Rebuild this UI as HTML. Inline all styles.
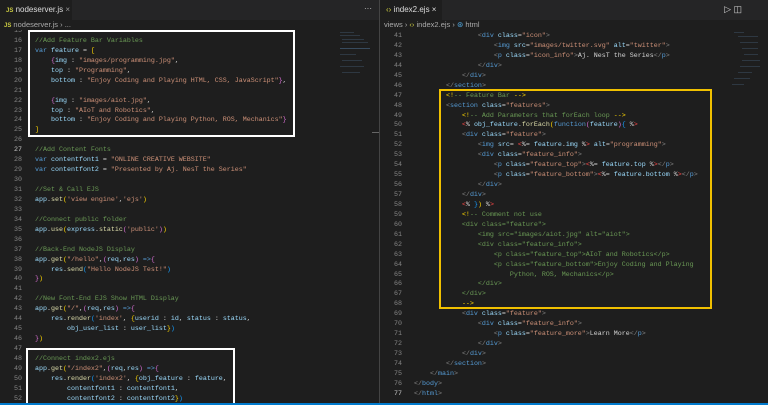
<!DOCTYPE html>
<html><head><meta charset="utf-8"><style>
*{margin:0;padding:0;box-sizing:border-box}
body{width:768px;height:405px;background:#1e1e1e;overflow:hidden;position:relative;font-family:"Liberation Sans",sans-serif}
.pane{position:absolute;top:0;height:405px;overflow:hidden;background:#1e1e1e}
.tabs{position:absolute;top:0;left:0;right:0;height:20px;background:#252526}
.tab{position:absolute;top:0;height:20px;background:#1e1e1e;color:#ddd;font-size:8px;line-height:20px;padding-left:6px;white-space:nowrap}
.crumb{position:absolute;top:20px;left:0;height:10px;color:#aaa;font-size:7.5px;line-height:10px;padding-left:4px;white-space:nowrap}
.code{position:absolute;left:0;font-family:"Liberation Mono",monospace;font-size:6.67px;line-height:9.93px;white-space:pre;color:#d4d4d4}
.ln{position:absolute;left:0;width:22px;text-align:right;font-family:"Liberation Mono",monospace;font-size:6.67px;line-height:9.93px;color:#858585;white-space:pre}
.c{color:#6a9955}.k{color:#569cd6}.v{color:#9cdcfe}.s{color:#ce9178}.f{color:#dcdcaa}.y{color:#ffd700}.p{color:#da70d6}.b{color:#179fff}.g{color:#808080}.w{color:#d4d4d4}.e{color:#f44747}
.box{position:absolute;border:2px solid #fff}
.minimap{position:absolute;background:#3a4a5a;height:1px}
</style></head><body>

<div class="pane" style="left:0;width:380px">
 <div class="ln" style="top:27px">15
16
17
18
19
20
21
22
23
24
25
26
<span style="color:#c6c6c6">27</span>
28
29
30
31
32
33
34
35
36
37
38
39
40
41
42
43
44
45
46
47
48
49
50
51
52</div>
 <div class="code" style="top:27px;left:35px">
<span class="c">//Add Feature Bar Variables</span>
<span class="k">var</span> <span class="v">feature</span> = <span class="y">[</span>
    <span class="p">{</span><span class="v">img</span> : <span class="s">"images/programming.jpg"</span>,
    <span class="v">top</span> : <span class="s">"Programming"</span>,
    <span class="v">bottom</span> : <span class="s">"Enjoy Coding and Playing HTML, CSS, JavaScript"</span><span class="p">}</span>,

    <span class="p">{</span><span class="v">img</span> : <span class="s">"images/aiot.jpg"</span>,
    <span class="v">top</span> : <span class="s">"AIoT and Robotics"</span>,
    <span class="v">bottom</span> : <span class="s">"Enjoy Coding and Playing Python, ROS, Mechanics"</span><span class="p">}</span>
<span class="y">]</span>

<span class="c">//Add Content Fonts</span>
<span class="k">var</span> <span class="v">contentfont1</span> = <span class="s">"ONLINE CREATIVE WEBSITE"</span>
<span class="k">var</span> <span class="v">contentfont2</span> = <span class="s">"Presented by Aj. NesT the Series"</span>

<span class="c">//Set &amp; Call EJS</span>
<span class="v">app</span>.<span class="f">set</span><span class="y">(</span><span class="s">'view engine'</span>,<span class="s">'ejs'</span><span class="y">)</span>

<span class="c">//Connect public folder</span>
<span class="v">app</span>.<span class="f">use</span><span class="y">(</span><span class="v">express</span>.<span class="f">static</span><span class="p">(</span><span class="s">'public'</span><span class="p">)</span><span class="y">)</span>

<span class="c">//Back-End NodeJS Display</span>
<span class="v">app</span>.<span class="f">get</span><span class="y">(</span><span class="s">"/hello"</span>,<span class="p">(</span><span class="v">req</span>,<span class="v">res</span><span class="p">)</span> <span class="k">=&gt;</span><span class="p">{</span>
    <span class="v">res</span>.<span class="f">send</span><span class="b">(</span><span class="s">"Hello NodeJS Test!"</span><span class="b">)</span>
<span class="p">}</span><span class="y">)</span>

<span class="c">//New Font-End EJS Show HTML Display</span>
<span class="v">app</span>.<span class="f">get</span><span class="y">(</span><span class="s">"/"</span>,<span class="p">(</span><span class="v">req</span>,<span class="v">res</span><span class="p">)</span> <span class="k">=&gt;</span><span class="p">{</span>
    <span class="v">res</span>.<span class="f">render</span><span class="b">(</span><span class="s">'index'</span>, <span class="y">{</span><span class="v">userid</span> : <span class="v">id</span>, <span class="v">status</span> : <span class="v">status</span>,
        <span class="v">obj_user_list</span> : <span class="v">user_list</span><span class="y">}</span><span class="b">)</span>
<span class="p">}</span><span class="y">)</span>

<span class="c">//Connect index2.ejs</span>
<span class="v">app</span>.<span class="f">get</span><span class="y">(</span><span class="s">"/index2"</span>,<span class="p">(</span><span class="v">req</span>,<span class="v">res</span><span class="p">)</span> <span class="k">=&gt;</span><span class="p">{</span>
    <span class="v">res</span>.<span class="f">render</span><span class="b">(</span><span class="s">'index2'</span>, <span class="y">{</span><span class="v">obj_feature</span> : <span class="v">feature</span>,
        <span class="v">contentfont1</span> : <span class="v">contentfont1</span>,
        <span class="v">contentfont2</span> : <span class="v">contentfont2</span><span class="y">}</span><span class="b">)</span></div>
 <div class="tabs"><div class="tab" style="left:0;width:72px"><span style="color:#cbcb41;font-weight:bold;font-size:6px">JS</span> nodeserver.js <span style="color:#999">×</span></div>
 <div style="position:absolute;right:8px;top:0;color:#ccc;font-size:8px;line-height:18px">···</div></div>
 <div class="crumb" style="background:#1e1e1e;width:380px"><span style="color:#cbcb41;font-weight:bold;font-size:6px">JS</span> nodeserver.js › ...</div>
 <div style="position:absolute;left:340px;top:30px;width:32px;height:50px;opacity:.6">
  <div class="minimap" style="top:2px;left:0;width:14px"></div><div class="minimap" style="top:5px;left:0;width:20px"></div><div class="minimap" style="top:9px;left:2px;width:22px"></div><div class="minimap" style="top:12px;left:2px;width:26px"></div><div class="minimap" style="top:18px;left:0;width:30px;background:#4a6a8a"></div><div class="minimap" style="top:24px;left:0;width:16px"></div><div class="minimap" style="top:30px;left:2px;width:20px"></div><div class="minimap" style="top:36px;left:0;width:24px"></div><div class="minimap" style="top:42px;left:2px;width:18px"></div>
 </div>
 <div style="position:absolute;left:372px;top:132px;width:7px;height:1px;background:#666"></div>
 <div class="box" style="left:28px;top:30px;width:267px;height:107px"></div>
 <div class="box" style="left:26px;top:348px;width:209px;height:60px"></div>
</div>
<div style="position:absolute;left:379px;top:0;width:1px;height:405px;background:#444"></div>

<div class="pane" style="left:380px;width:388px">
 <div class="ln" style="top:32px;width:22px">41
42
43
44
45
46
47
48
49
50
51
52
53
54
55
56
57
58
59
60
61
62
63
64
65
66
67
68
69
70
71
72
73
74
75
76
<span style="color:#c6c6c6">77</span></div>
 <div class="code" style="top:32px;left:34px">                <span class="g">&lt;</span><span class="k">div</span> <span class="v">class</span>=<span class="s">"icon"</span><span class="g">&gt;</span>
                    <span class="g">&lt;</span><span class="k">img</span> <span class="v">src</span>=<span class="s">"images/twitter.svg"</span> <span class="v">alt</span>=<span class="s">"twitter"</span><span class="g">&gt;</span>
                    <span class="g">&lt;</span><span class="k">p</span> <span class="v">class</span>=<span class="s">"icon_info"</span><span class="g">&gt;</span>Aj. NesT the Series<span class="g">&lt;/</span><span class="k">p</span><span class="g">&gt;</span>
                <span class="g">&lt;/</span><span class="k">div</span><span class="g">&gt;</span>
            <span class="g">&lt;/</span><span class="k">div</span><span class="g">&gt;</span>
        <span class="g">&lt;/</span><span class="k">section</span><span class="g">&gt;</span>
        <span class="y">&lt;!</span><span class="c">-- Feature Bar </span><span class="y">--&gt;</span>
        <span class="g">&lt;</span><span class="k">section</span> <span class="v">class</span>=<span class="s">"features"</span><span class="g">&gt;</span>
            <span class="y">&lt;!</span><span class="c">-- Add Parameters that forEach loop </span><span class="y">--&gt;</span>
            <span class="e">&lt;</span>% <span class="v">obj_feature</span>.<span class="f">forEach</span><span class="y">(</span><span class="k">function</span><span class="p">(</span><span class="v">feature</span><span class="p">)</span><span class="b">{</span> %<span class="e">&gt;</span>
            <span class="g">&lt;</span><span class="k">div</span> <span class="v">class</span>=<span class="s">"feature"</span><span class="g">&gt;</span>
                <span class="g">&lt;</span><span class="k">img</span> <span class="v">src</span>= <span class="e">&lt;</span>%= <span class="v">feature</span>.<span class="v">img</span> %<span class="e">&gt;</span> <span class="v">alt</span>=<span class="s">"programming"</span><span class="g">&gt;</span>
                <span class="g">&lt;</span><span class="k">div</span> <span class="v">class</span>=<span class="s">"feature_info"</span><span class="g">&gt;</span>
                    <span class="g">&lt;</span><span class="k">p</span> <span class="v">class</span>=<span class="s">"feature_top"</span><span class="g">&gt;</span><span class="e">&lt;</span>%= <span class="v">feature</span>.<span class="v">top</span> %<span class="e">&gt;</span><span class="g">&lt;/</span><span class="k">p</span><span class="g">&gt;</span>
                    <span class="g">&lt;</span><span class="k">p</span> <span class="v">class</span>=<span class="s">"feature_bottom"</span><span class="g">&gt;</span><span class="e">&lt;</span>%= <span class="v">feature</span>.<span class="v">bottom</span> %<span class="e">&gt;</span><span class="g">&lt;/</span><span class="k">p</span><span class="g">&gt;</span>
                <span class="g">&lt;/</span><span class="k">div</span><span class="g">&gt;</span>
            <span class="g">&lt;/</span><span class="k">div</span><span class="g">&gt;</span>
            <span class="e">&lt;</span>% <span class="b">}</span><span class="y">)</span> %<span class="e">&gt;</span>
            <span class="y">&lt;!</span><span class="c">-- Comment not use</span>
<span class="c">            &lt;div class="feature"&gt;</span>
<span class="c">                &lt;img src="images/aiot.jpg" alt="aiot"&gt;</span>
<span class="c">                &lt;div class="feature_info"&gt;</span>
<span class="c">                    &lt;p class="feature_top"&gt;AIoT and Robotics&lt;/p&gt;</span>
<span class="c">                    &lt;p class="feature_bottom"&gt;Enjoy Coding and Playing</span>
<span class="c">                        Python, ROS, Mechanics&lt;/p&gt;</span>
<span class="c">                &lt;/div&gt;</span>
<span class="c">            &lt;/div&gt;</span>
            <span class="y">--&gt;</span>
            <span class="g">&lt;</span><span class="k">div</span> <span class="v">class</span>=<span class="s">"feature"</span><span class="g">&gt;</span>
                <span class="g">&lt;</span><span class="k">div</span> <span class="v">class</span>=<span class="s">"feature_info"</span><span class="g">&gt;</span>
                    <span class="g">&lt;</span><span class="k">p</span> <span class="v">class</span>=<span class="s">"feature_more"</span><span class="g">&gt;</span>Learn More<span class="g">&lt;/</span><span class="k">p</span><span class="g">&gt;</span>
                <span class="g">&lt;/</span><span class="k">div</span><span class="g">&gt;</span>
            <span class="g">&lt;/</span><span class="k">div</span><span class="g">&gt;</span>
        <span class="g">&lt;/</span><span class="k">section</span><span class="g">&gt;</span>
    <span class="g">&lt;/</span><span class="k">main</span><span class="g">&gt;</span>
<span class="g">&lt;/</span><span class="k">body</span><span class="g">&gt;</span>
<span class="g">&lt;/</span><span class="k">html</span><span class="g">&gt;</span></div>
 <div class="tabs"><div class="tab" style="left:0;width:62px"><span style="color:#cbcb41">‹›</span> index2.ejs <span style="color:#ddd">×</span></div>
 <div style="position:absolute;right:26px;top:4px;color:#ccc;font-size:9px">▷ ◫</div></div>
 <div class="crumb" style="background:#1e1e1e;width:388px">views › <span style="color:#cbcb41">‹›</span> index2.ejs › <span style="color:#4fa3d9">⊛</span> html</div>
 <div style="position:absolute;left:350px;top:30px;width:32px;height:60px;opacity:.6">
  <div class="minimap" style="top:2px;left:4px;width:10px"></div><div class="minimap" style="top:6px;left:8px;width:20px"></div><div class="minimap" style="top:12px;left:10px;width:18px"></div><div class="minimap" style="top:18px;left:12px;width:16px"></div><div class="minimap" style="top:24px;left:14px;width:14px"></div><div class="minimap" style="top:30px;left:12px;width:18px"></div><div class="minimap" style="top:36px;left:10px;width:20px"></div><div class="minimap" style="top:42px;left:8px;width:14px"></div><div class="minimap" style="top:48px;left:4px;width:16px"></div><div class="minimap" style="top:54px;left:2px;width:12px"></div>
 </div>
 <div class="box" style="left:59px;top:89px;width:273px;height:220px;border-color:#f0c000"></div>
</div>
<div style="position:absolute;left:0;top:403px;width:768px;height:2px;background:#007acc"></div>
</body></html>
